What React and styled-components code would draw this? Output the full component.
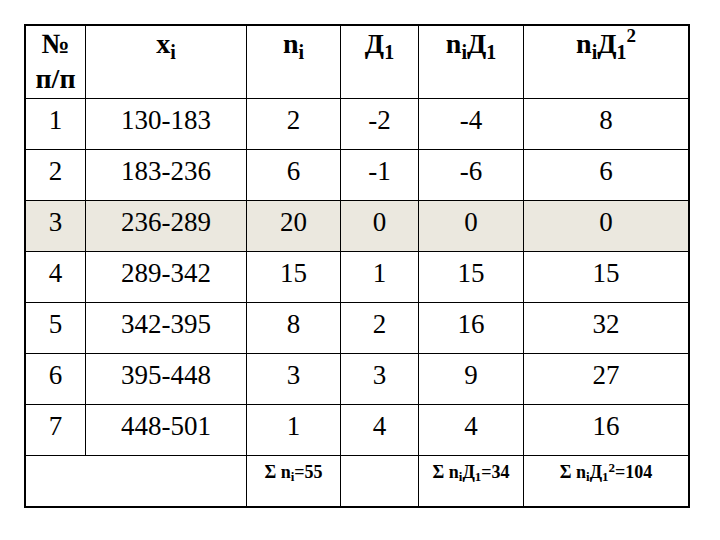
import React from "react";
import styled, { createGlobalStyle } from "styled-components";

const SERIF = '"Times New Roman", "Liberation Serif", Tinos, serif';

const GlobalStyle = createGlobalStyle`
  html, body { margin: 0; padding: 0; background: #ffffff; }
  body { font-family: ${SERIF}; color: #000; }
`;

const Page = styled.div`
  width: 720px;
  height: 540px;
  box-sizing: border-box;
  padding: 24px 0 0 24px;
  background: #fff;
`;

const Grid = styled.div`
  display: grid;
  width: 666px;
  box-sizing: border-box;
  border: 2px solid #000;
  grid-template-columns: 60px 161px 94px 78px 105px 164px;
  grid-template-rows: 73px repeat(7, 51px) 50px;
`;

const Cell = styled.div`
  box-sizing: border-box;
  font-family: ${(p) => p.$font || SERIF};
  color: #000;
  border-right: ${(p) => (p.$lastCol ? "none" : "1px solid #000")};
  border-bottom: ${(p) => (p.$lastRow ? "none" : "1px solid #000")};
  background: ${(p) => (p.$shaded ? "#ebe8df" : "#fff")};
  grid-column: ${(p) => (p.$span ? `span ${p.$span}` : "auto")};
  text-align: center;
  white-space: nowrap;
`;

const HeadCell = styled(Cell)`
  font-weight: bold;
  font-size: 28px;
  line-height: 35px;
  padding-top: 0;
`;

const BodyCell = styled(Cell)`
  font-size: 27px;
  line-height: 31px;
  padding-top: 6px;
`;

const SumCell = styled(Cell)`
  font-weight: bold;
  font-size: 18px;
  line-height: 22px;
  padding-top: 5px;
`;

const Sub = styled.sub`
  font-size: ${(p) => (p.$small ? "13px" : "20px")};
  vertical-align: ${(p) => (p.$small ? "-3px" : "-6px")};
  line-height: 0;
`;

const Sup = styled.sup`
  font-size: ${(p) => (p.$small ? "13px" : "19px")};
  vertical-align: ${(p) => (p.$small ? "6px" : "11px")};
  line-height: 0;
`;

const rows = [
  ["1", "130-183", "2", "-2", "-4", "8"],
  ["2", "183-236", "6", "-1", "-6", "6"],
  ["3", "236-289", "20", "0", "0", "0"],
  ["4", "289-342", "15", "1", "15", "15"],
  ["5", "342-395", "8", "2", "16", "32"],
  ["6", "395-448", "3", "3", "9", "27"],
  ["7", "448-501", "1", "4", "4", "16"],
];

export default function App() {
  return (
    <Page>
      <GlobalStyle />
      <Grid>
        <HeadCell>
          №
          <br />
          п/п
        </HeadCell>
        <HeadCell>
          x<Sub>i</Sub>
        </HeadCell>
        <HeadCell>
          n<Sub>i</Sub>
        </HeadCell>
        <HeadCell>
          Д<Sub>1</Sub>
        </HeadCell>
        <HeadCell>
          n<Sub>i</Sub>Д<Sub>1</Sub>
        </HeadCell>
        <HeadCell $lastCol>
          n<Sub>i</Sub>Д<Sub>1</Sub>
          <Sup>2</Sup>
        </HeadCell>

        {rows.map((r, ri) =>
          r.map((v, ci) => (
            <BodyCell
              key={`${ri}-${ci}`}
              $lastCol={ci === r.length - 1}
              $shaded={ri === 2}
            >
              {v}
            </BodyCell>
          ))
        )}

        <SumCell $span={2} $lastRow />
        <SumCell $lastRow>
          Σ n<Sub $small>i</Sub>=55
        </SumCell>
        <SumCell $lastRow />
        <SumCell $lastRow>
          Σ n<Sub $small>i</Sub>Д<Sub $small>1</Sub>=34
        </SumCell>
        <SumCell $lastRow $lastCol>
          Σ n<Sub $small>i</Sub>Д<Sub $small>1</Sub>
          <Sup $small>2</Sup>=104
        </SumCell>
      </Grid>
    </Page>
  );
}
